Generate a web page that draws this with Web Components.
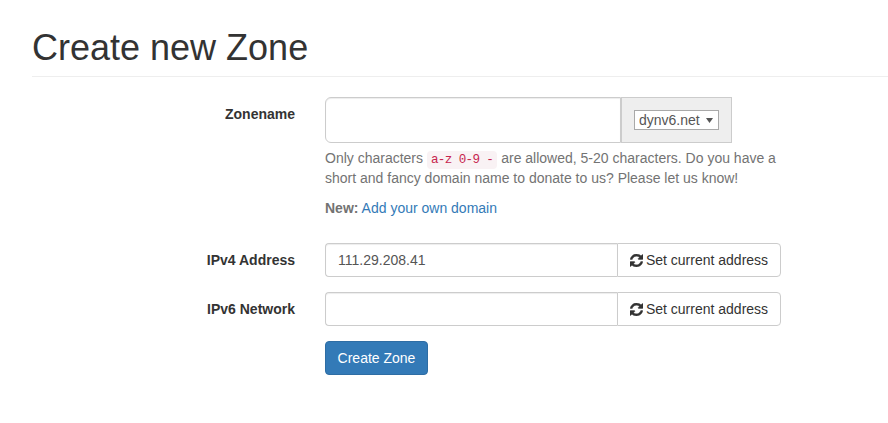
<!DOCTYPE html>
<html>
<head>
<meta charset="utf-8">
<title>Create new Zone</title>
<style>
html, body { margin: 0; padding: 0; background: #fff; }
body { font: 14px/20px "Liberation Sans", Arial, sans-serif; color: #333; overflow: hidden; }
code { font: 12.6px "Liberation Mono", Consolas, monospace; letter-spacing: -.63px; color: #c7254e; background: #f9f2f4; padding: 2px 4px; border-radius: 4px; }
a { color: #337ab7; text-decoration: none; }
</style>
</head>
<body>
<zone-page>
    <page-header>Create new Zone</page-header>
    <form-row label="Zonename">
        <zone-input></zone-input>
        <help-text>
            <p>Only characters <code>a-z 0-9 -</code> are allowed, 5-20 characters. Do you have a short and fancy domain name to donate to us? Please let us know!</p>
            <p><b>New:</b> <a href="#">Add your own domain</a></p>
        </help-text>
    </form-row>
    <form-row label="IPv4 Address">
        <address-input value="111.29.208.41"></address-input>
    </form-row>
    <form-row label="IPv6 Network">
        <address-input></address-input>
    </form-row>
    <form-row>
        <create-button>Create Zone</create-button>
    </form-row>
</zone-page>
<script>
class ZonePage extends HTMLElement {
    constructor() {
        super();
        this.attachShadow({mode: 'open'}).innerHTML = `
            <style>
            :host { display: block; height: 423px; box-sizing: border-box; padding: 28px 0 0 32px; }
            </style>
            <slot></slot>`
    }
}
window.customElements.define('zone-page', ZonePage)

class PageHeader extends HTMLElement {
    constructor() {
        super();
        this.attachShadow({mode: 'open'}).innerHTML = `
            <style>
            :host { display: block; border-bottom: 1px solid #eee; padding-bottom: 8px; margin-bottom: 20px; }
            h1 { margin: 0; font: 500 36px/40px "Liberation Sans", Arial, sans-serif; color: #333; }
            </style>
            <h1><slot></slot></h1>`
    }
}
window.customElements.define('page-header', PageHeader)

class FormRow extends HTMLElement {
    constructor() {
        super();
        const shadow = this.attachShadow({mode: 'open'});
        shadow.innerHTML = `
            <style>
            :host { display: grid; grid-template-columns: 263px 456px; column-gap: 30px; margin-bottom: 15px; }
            label { font-weight: bold; text-align: right; padding-top: 7px; color: #333; }
            </style>
            <label></label>
            <div><slot></slot></div>`
        shadow.querySelector('label').textContent = this.getAttribute('label') || ''
    }
}
window.customElements.define('form-row', FormRow)

class ZoneInput extends HTMLElement {
    constructor() {
        super();
        this.attachShadow({mode: 'open'}).innerHTML = `
            <style>
            :host { display: flex; width: 407px; height: 46px; box-sizing: border-box; }
            input { flex: 1; min-width: 0; box-sizing: border-box; height: 46px; border: 1px solid #ccc; border-radius: 6px 0 0 6px;
                box-shadow: inset 0 1px 1px rgba(0,0,0,.075); padding: 10px 16px; font: 18px "Liberation Sans", Arial, sans-serif; outline: 0; }
            .addon { width: 111px; box-sizing: border-box; display: flex; align-items: center; justify-content: center; background: #eee;
                border: 1px solid #ccc; }
            .pick { position: relative; display: block; width: 85px; height: 20px; }
            select { display: block; appearance: none; -webkit-appearance: none; width: 100%; height: 100%; box-sizing: border-box; font: 14px "Liberation Sans", Arial, sans-serif; color: #555; background: #fff;
                border: 1px solid #a9a9a9; padding: 0 0 0 4px; margin: 0; border-radius: 0; outline: 0; }
            svg { position: absolute; right: 6px; top: 8px; width: 7px; height: 5px; fill: #555; pointer-events: none; }
            </style>
            <input type="text">
            <div class="addon">
                <span class="pick">
                    <select><option>dynv6.net</option></select>
                    <svg viewBox="0 0 7 5"><path d="M0 0h7L3.5 5z"/></svg>
                </span>
            </div>`
    }
}
window.customElements.define('zone-input', ZoneInput)

class HelpText extends HTMLElement {
    constructor() {
        super();
        this.attachShadow({mode: 'open'}).innerHTML = `
            <style>
            :host { display: block; margin-top: 5px; color: #737373; }
            ::slotted(p) { margin: 0 0 10px; }
            </style>
            <slot></slot>`
    }
}
window.customElements.define('help-text', HelpText)

class AddressInput extends HTMLElement {
    constructor() {
        super();
        const shadow = this.attachShadow({mode: 'open'});
        shadow.innerHTML = `
            <style>
            :host { display: flex; height: 34px; }
            input { flex: 1; min-width: 0; box-sizing: border-box; height: 34px; border: 1px solid #ccc; border-right: 0; border-radius: 4px 0 0 4px;
                box-shadow: inset 0 1px 1px rgba(0,0,0,.075); padding: 6px 12px; font: 14px "Liberation Sans", Arial, sans-serif; color: #555; outline: 0; }
            button { box-sizing: border-box; width: 164px; height: 34px; display: flex; align-items: center; justify-content: center; gap: 3px; background: #fff; color: #333;
                border: 1px solid #ccc; border-radius: 0 4px 4px 0; padding: 0; font: 14px "Liberation Sans", Arial, sans-serif; }
            svg { width: 13px; height: 13px; fill: currentColor; stroke: currentColor; stroke-width: 50; display: block; }
            </style>
            <input type="text">
            <button type="button">
                <svg viewBox="128 128 1536 1536"><path d="M1639 1056q0 5-1 7-64 268-268 434.5t-478 166.5q-146 0-282.5-55t-243.5-157l-129 129q-19 19-45 19t-45-19-19-45v-448q0-26 19-45t45-19h448q26 0 45 19t19 45-19 45l-137 137q71 66 161 102t187 36q134 0 250-65t186-179q11-17 53-117 8-23 30-23h192q13 0 22.5 9.5t9.5 22.5zm25-800v448q0 26-19 45t-45 19h-448q-26 0-45-19t-19-45 19-45l138-138q-148-137-349-137-134 0-250 65t-186 179q-11 17-53 117-8 23-30 23h-199q-13 0-22.5-9.5t-9.5-22.5v-7q65-268 270-434.5t480-166.5q146 0 284 55.5t245 156.5l130-129q19-19 45-19t45 19 19 45z"/></svg>
                <span>Set current address</span>
            </button>`
        shadow.querySelector('input').value = this.getAttribute('value') || ''
    }
}
window.customElements.define('address-input', AddressInput)

class CreateButton extends HTMLElement {
    constructor() {
        super();
        this.attachShadow({mode: 'open'}).innerHTML = `
            <style>
            :host { display: block; }
            button { box-sizing: border-box; width: 103px; height: 34px; padding: 0; background: #337ab7; color: #fff; border: 1px solid #2e6da4; border-radius: 4px;
                font: 14px/20px "Liberation Sans", Arial, sans-serif; }
            </style>
            <button type="submit"><slot></slot></button>`
    }
}
window.customElements.define('create-button', CreateButton)
</script>
</body>
</html>
